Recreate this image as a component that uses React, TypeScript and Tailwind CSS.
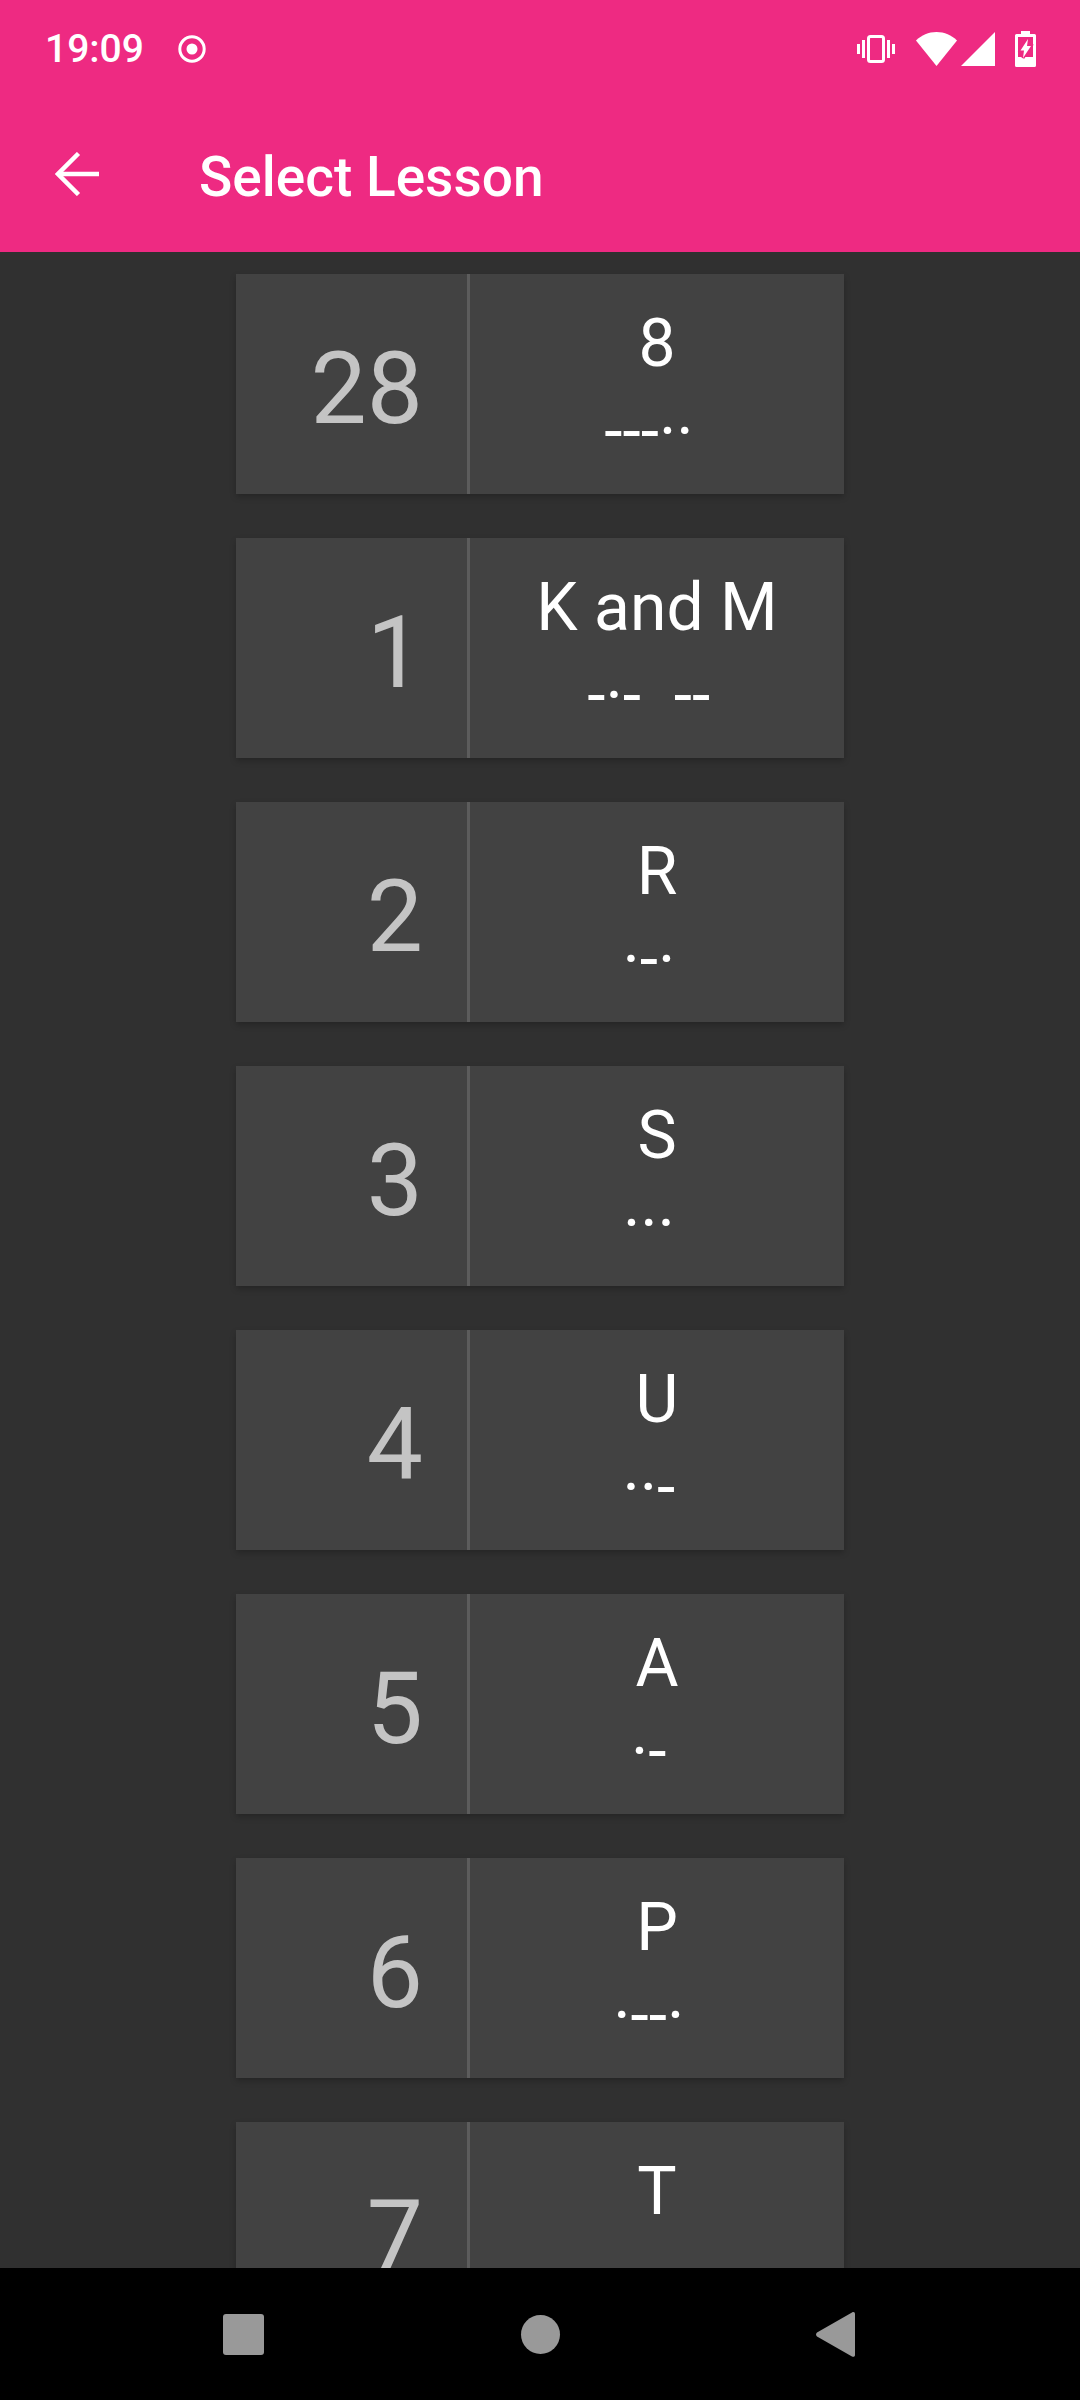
const font = { fontFamily: "Roboto, sans-serif" };

type Lesson = { num: number; name: string; morse: string };

const lessons: Lesson[] = [
  { num: 28, name: "8", morse: "---·· " },
  { num: 1, name: "K and M", morse: "-·-  -- " },
  { num: 2, name: "R", morse: "·-· " },
  { num: 3, name: "S", morse: "··· " },
  { num: 4, name: "U", morse: "··- " },
  { num: 5, name: "A", morse: "·- " },
  { num: 6, name: "P", morse: "·--· " },
  { num: 7, name: "T", morse: "- " },
];

function StatusBar() {
  return (
    <div className="flex h-[84px] items-center pl-[45px] pr-[44px] pt-[14px]">
      <span className="text-[39px] font-medium leading-none text-white">19:09</span>
      <svg className="ml-[34px]" width="28" height="28" viewBox="0 0 28 28">
        <circle cx="14" cy="14" r="12.2" fill="none" stroke="white" strokeWidth="3" />
        <circle cx="14" cy="14" r="5.5" fill="white" />
      </svg>
      <div className="ml-auto flex items-center">
        <svg width="38" height="28" viewBox="0 0 38 28" fill="white">
          <rect x="0" y="9" width="3" height="10" />
          <rect x="5" y="5" width="3" height="18" />
          <rect x="30" y="5" width="3" height="18" />
          <rect x="35" y="9" width="3" height="10" />
          <rect x="11.5" y="1.5" width="15" height="25" rx="2" fill="none" stroke="white" strokeWidth="3" />
        </svg>
        <svg className="ml-[21px]" width="41" height="34" viewBox="0 0 41 34" fill="white">
          <path d="M0 8.5C5.5 3.2 12.5 0 20.5 0S35.500 3.200 41 8.500L20.500 34z" />
        </svg>
        <svg className="ml-[4px]" width="34" height="34" viewBox="0 0 34 34" fill="white">
          <path d="M34 0v34H0z" />
        </svg>
        <svg className="ml-[20px]" width="21" height="36" viewBox="0 0 21 36">
          <path
            fill="white"
            fillRule="evenodd"
            d="M6 0h9v3h4.500A1.500 1.500 0 0 1 21 4.500V34.500A1.500 1.500 0 0 1 19.500 36H1.500A1.500 1.500 0 0 1 0 34.500V4.500A1.500 1.500 0 0 1 1.500 3H6zM3 6v20h15V6z"
          />
          <path
            fill="white"
            stroke="#ee2a82"
            strokeWidth="3"
            paintOrder="stroke"
            d="M13 8 5.500 19.500h3.500l-1 7.500 8-12h-4z"
          />
        </svg>
      </div>
    </div>
  );
}

function Toolbar() {
  return (
    <div className="flex h-[168px] items-center pl-[55px]">
      <svg className="mt-[12px]" width="44" height="44" viewBox="0 0 44 44" fill="none" stroke="white" strokeWidth="4.5">
        <path d="M44 22H3" />
        <path d="M23.500 1.500 3 22l20.500 20.500" />
      </svg>
      <span className="ml-[100px] pt-[19px] text-[55px] font-medium leading-none text-white">Select Lesson</span>
    </div>
  );
}

function LessonCard({ lesson }: { lesson: Lesson }) {
  return (
    <div className="flex h-[220px] w-[608px] shrink-0 bg-[#424242] shadow-[0_3px_6px_rgba(0,0,0,0.22)]">
      <div className="flex w-[231px] items-center justify-end pr-[44px] pt-[10px] text-[100px] leading-none text-[#c4c4c4]">
        {lesson.num}
      </div>
      <div className="w-[3px] bg-[#5c5c5c]" />
      <div className="flex flex-1 flex-col items-center pt-[28px] text-[66px] leading-[84px] text-white">
        <span>{lesson.name}</span>
        <span className="mt-[4px] whitespace-pre">{lesson.morse}</span>
      </div>
    </div>
  );
}

function NavBar() {
  return (
    <div className="flex h-[132px] shrink-0 items-center justify-between bg-black pl-[223px] pr-[225px]">
      <div className="h-[41px] w-[41px] rounded-[3px] bg-[#999999]" />
      <div className="h-[39px] w-[39px] rounded-full bg-[#999999]" />
      <svg width="39" height="45" viewBox="0 0 39 45" fill="#999999">
        <path d="M36 .6c1.800-1.200 3 0 3 1.400v41c0 1.500-1.300 2.500-3 1.400L1 24.500c-1.300-1-1.300-3 0-4z" />
      </svg>
    </div>
  );
}

export default function App() {
  return (
    <div className="flex h-[2400px] w-[1080px] flex-col overflow-hidden bg-[#303030]" style={font}>
      <div className="h-[252px] shrink-0 bg-[#ee2a82]">
        <StatusBar />
        <Toolbar />
      </div>
      <div className="flex min-h-0 flex-1 flex-col items-center gap-[44px] overflow-hidden pt-[22px]">
        {lessons.map((lesson) => (
          <LessonCard key={lesson.num} lesson={lesson} />
        ))}
      </div>
      <NavBar />
    </div>
  );
}
